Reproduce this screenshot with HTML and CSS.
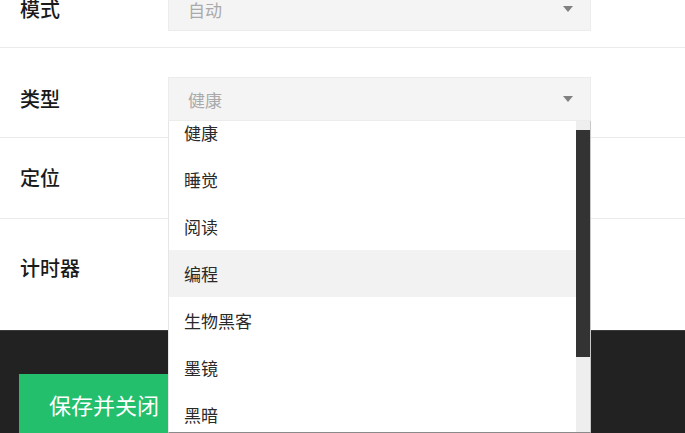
FILE: index.html
```html
<!DOCTYPE html>
<html lang="zh-CN">
<head>
    <meta charset="UTF-8">
    <meta name="viewport" content="width=device-width, initial-scale=1.0">
    <title>设置</title>
    <link rel="stylesheet" href="styles.css">
</head>
<body>
    <div class="settings-form">
        <div class="form-row select-row">
            <div class="form-label">模式</div>
            <div class="select-wrap">
                <div class="select-box">
                    <span class="select-value">自动</span>
                    <span class="select-arrow"></span>
                </div>
            </div>
        </div>

        <div class="form-row select-row">
            <div class="form-label">类型</div>
            <div class="select-wrap">
                <div class="select-box">
                    <span class="select-value">健康</span>
                    <span class="select-arrow"></span>
                </div>

                <div class="select-menu">
                    <ul class="menu-list" id="typeMenu">
                        <li class="menu-item">健康</li>
                        <li class="menu-item">睡觉</li>
                        <li class="menu-item">阅读</li>
                        <li class="menu-item active">编程</li>
                        <li class="menu-item">生物黑客</li>
                        <li class="menu-item">墨镜</li>
                        <li class="menu-item">黑暗</li>
                        <li class="menu-item">冥想</li>
                        <li class="menu-item">工作</li>
                    </ul>
                    <div class="menu-scrollbar">
                        <div class="menu-thumb"></div>
                    </div>
                </div>
            </div>
        </div>

        <div class="form-row plain-row">
            <div class="form-label">定位</div>
        </div>

        <div class="form-row timer-row">
            <div class="form-label">计时器</div>
        </div>
    </div>

    <div class="form-footer">
        <button class="save-button">保存并关闭</button>
    </div>

    <script>
        // menu is open and scrolled a little past the first option
        document.getElementById('typeMenu').scrollTop = 12;
    </script>
</body>
</html>
```

FILE: styles.css
```css
body {
    margin: 0;
    background: #fff;
    font-family: "Noto Sans CJK SC", "Noto Sans", sans-serif;
    overflow: hidden;
}

.settings-form {
    margin-top: -42px;
}

.form-row {
    display: flex;
    align-items: center;
    padding: 0 20px;
    border-bottom: 1px solid #ebebeb;
}

.select-row {
    padding-top: 29px;
    padding-bottom: 16px;
}

.plain-row {
    padding-top: 26px;
    padding-bottom: 26px;
}

.timer-row {
    padding-top: 35px;
    padding-bottom: 48px;
    border-bottom: none;
}

.form-label {
    width: 148px;
    font-size: 20px;
    font-weight: 500;
    line-height: 28px;
    color: #1a1a1a;
}

.select-wrap {
    position: relative;
    width: 423px;
}

.select-box {
    box-sizing: border-box;
    height: 44px;
    display: flex;
    align-items: center;
    justify-content: space-between;
    padding: 0 17px 0 19px;
    background: #f4f4f4;
    border: 1px solid #ececec;
}

.select-value {
    font-size: 17px;
    color: #aaa;
}

.select-arrow {
    width: 0;
    height: 0;
    border-left: 5px solid transparent;
    border-right: 5px solid transparent;
    border-top: 6px solid #808080;
}

.select-menu {
    position: absolute;
    top: 100%;
    left: 0;
    right: 0;
    z-index: 10;
    display: flex;
    height: 311px;
    background: #fff;
    border-left: 1px solid #e6e6e6;
    border-right: 1px solid #c8c8c8;
    border-bottom: 1px solid #8a8a8a;
}

.menu-list {
    flex: 1;
    list-style: none;
    margin: 0;
    padding: 0;
    overflow: hidden;
}

.menu-scrollbar {
    width: 14px;
    background: #eeeeee;
}

.menu-thumb {
    margin-top: 9px;
    height: 227px;
    background: #333;
}

.menu-item {
    height: 47px;
    line-height: 47px;
    padding-left: 15px;
    font-size: 17px;
    color: #2a2a2a;
}

.menu-item.active {
    background: #f2f2f2;
}

.form-footer {
    background: #222;
    border-top: 1px solid #3a3a3a;
    padding: 43px 0 0 19px;
    height: 120px;
}

.save-button {
    height: 60px;
    padding: 0 30px;
    border: none;
    background: #23bf6c;
    color: #fff;
    font-family: inherit;
    font-size: 22px;
    cursor: pointer;
}
```
